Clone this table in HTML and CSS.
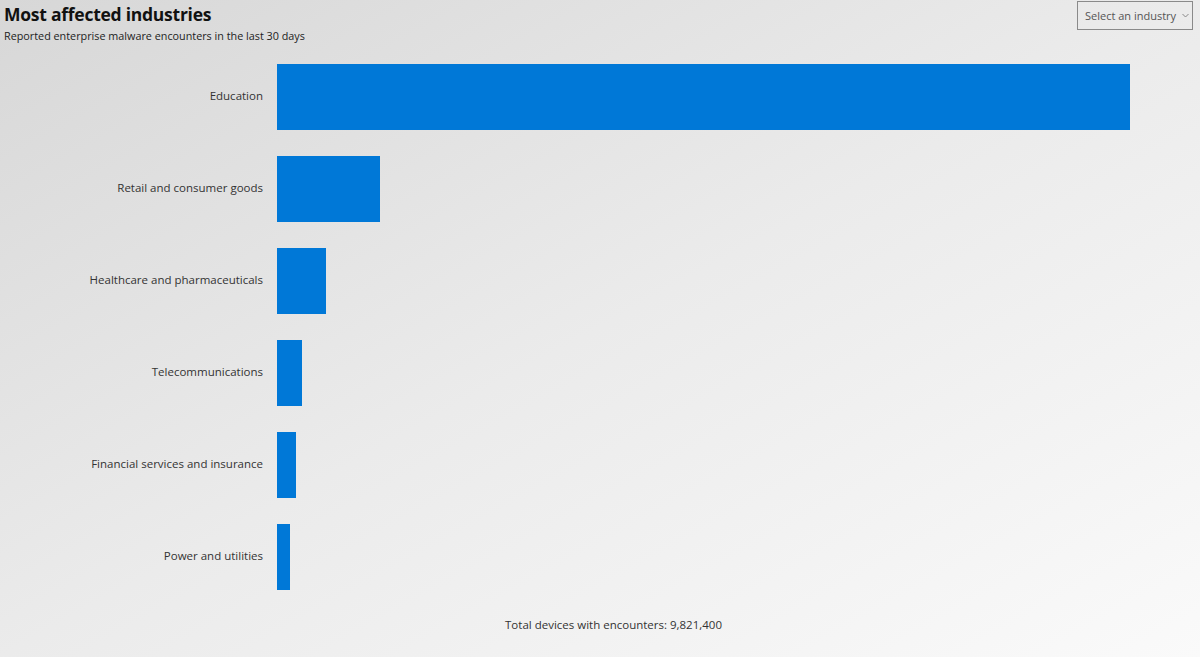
FILE: index.html
```html
<!DOCTYPE html>
<html lang="en">
<head>
<meta charset="utf-8">
<title>Most affected industries</title>
<link rel="stylesheet" href="styles.css">
</head>
<body>
<div class="page">
  <header class="header">
    <div class="titles">
      <h1 class="title">Most affected industries</h1>
      <p class="subtitle">Reported enterprise malware encounters in the last 30 days</p>
    </div>
    <div class="select">
      <span class="select-text">Select an industry</span>
      <svg class="chev" width="7" height="5" viewBox="0 0 7 5"><path d="M0.5 1 L3.5 4 L6.5 1" fill="none" stroke="#888" stroke-width="1"/></svg>
    </div>
  </header>
  <div class="chart">
    <div class="label">Education</div><div class="track"><div class="bar" style="width:853px"></div></div>
    <div class="label">Retail and consumer goods</div><div class="track"><div class="bar" style="width:103px"></div></div>
    <div class="label">Healthcare and pharmaceuticals</div><div class="track"><div class="bar" style="width:49px"></div></div>
    <div class="label">Telecommunications</div><div class="track"><div class="bar" style="width:25px"></div></div>
    <div class="label">Financial services and insurance</div><div class="track"><div class="bar" style="width:19px"></div></div>
    <div class="label">Power and utilities</div><div class="track"><div class="bar" style="width:13px"></div></div>
  </div>
  <div class="footer">Total devices with encounters: 9,821,400</div>
</div>
</body>
</html>
```
FILE: styles.css
```css
html, body {
  margin: 0;
  padding: 0;
  height: 100%;
}
body {
  background: linear-gradient(to bottom right, #d7d7d7 0%, #ebebeb 50%, #fafafa 100%);
  font-family: "Open Sans", "Noto Sans", sans-serif;
  color: #222;
  overflow: hidden;
}
.page {
  width: 1200px;
  height: 657px;
  display: flex;
  flex-direction: column;
}
.header {
  display: flex;
  justify-content: space-between;
  align-items: flex-start;
  padding: 1px 7px 0 4px;
  height: 64px;
  box-sizing: border-box;
}
.title {
  margin: 2px 0 0 0;
  font-size: 17.5px;
  font-weight: 700;
  line-height: 22px;
  color: #111;
  letter-spacing: -0.25px;
}
.subtitle {
  margin: 4px 0 0 0;
  font-size: 10.8px;
  line-height: 14px;
  color: #222;
}
.select {
  display: flex;
  align-items: center;
  gap: 6px;
  width: 116px;
  height: 29px;
  box-sizing: border-box;
  border: 1px solid #8a8a8a;
  padding: 0 6px 0 7px;
  background: transparent;
}
.select-text {
  font-size: 11px;
  color: #555;
  white-space: nowrap;
}
.chev {
  flex: none;
}
.chart {
  display: grid;
  grid-template-columns: 263px 1fr;
  column-gap: 14px;
  row-gap: 26px;
  grid-auto-rows: 66px;
  margin-top: 0;
}
.label {
  display: flex;
  align-items: center;
  justify-content: flex-end;
  font-size: 11.5px;
  color: #333;
  white-space: nowrap;
  padding-bottom: 3px;
}
.track {
  display: flex;
}
.bar {
  height: 100%;
  background: #0078d7;
}
.footer {
  margin-top: 27px;
  text-align: center;
  font-size: 11.5px;
  color: #333;
  padding-left: 27px;
}
```
